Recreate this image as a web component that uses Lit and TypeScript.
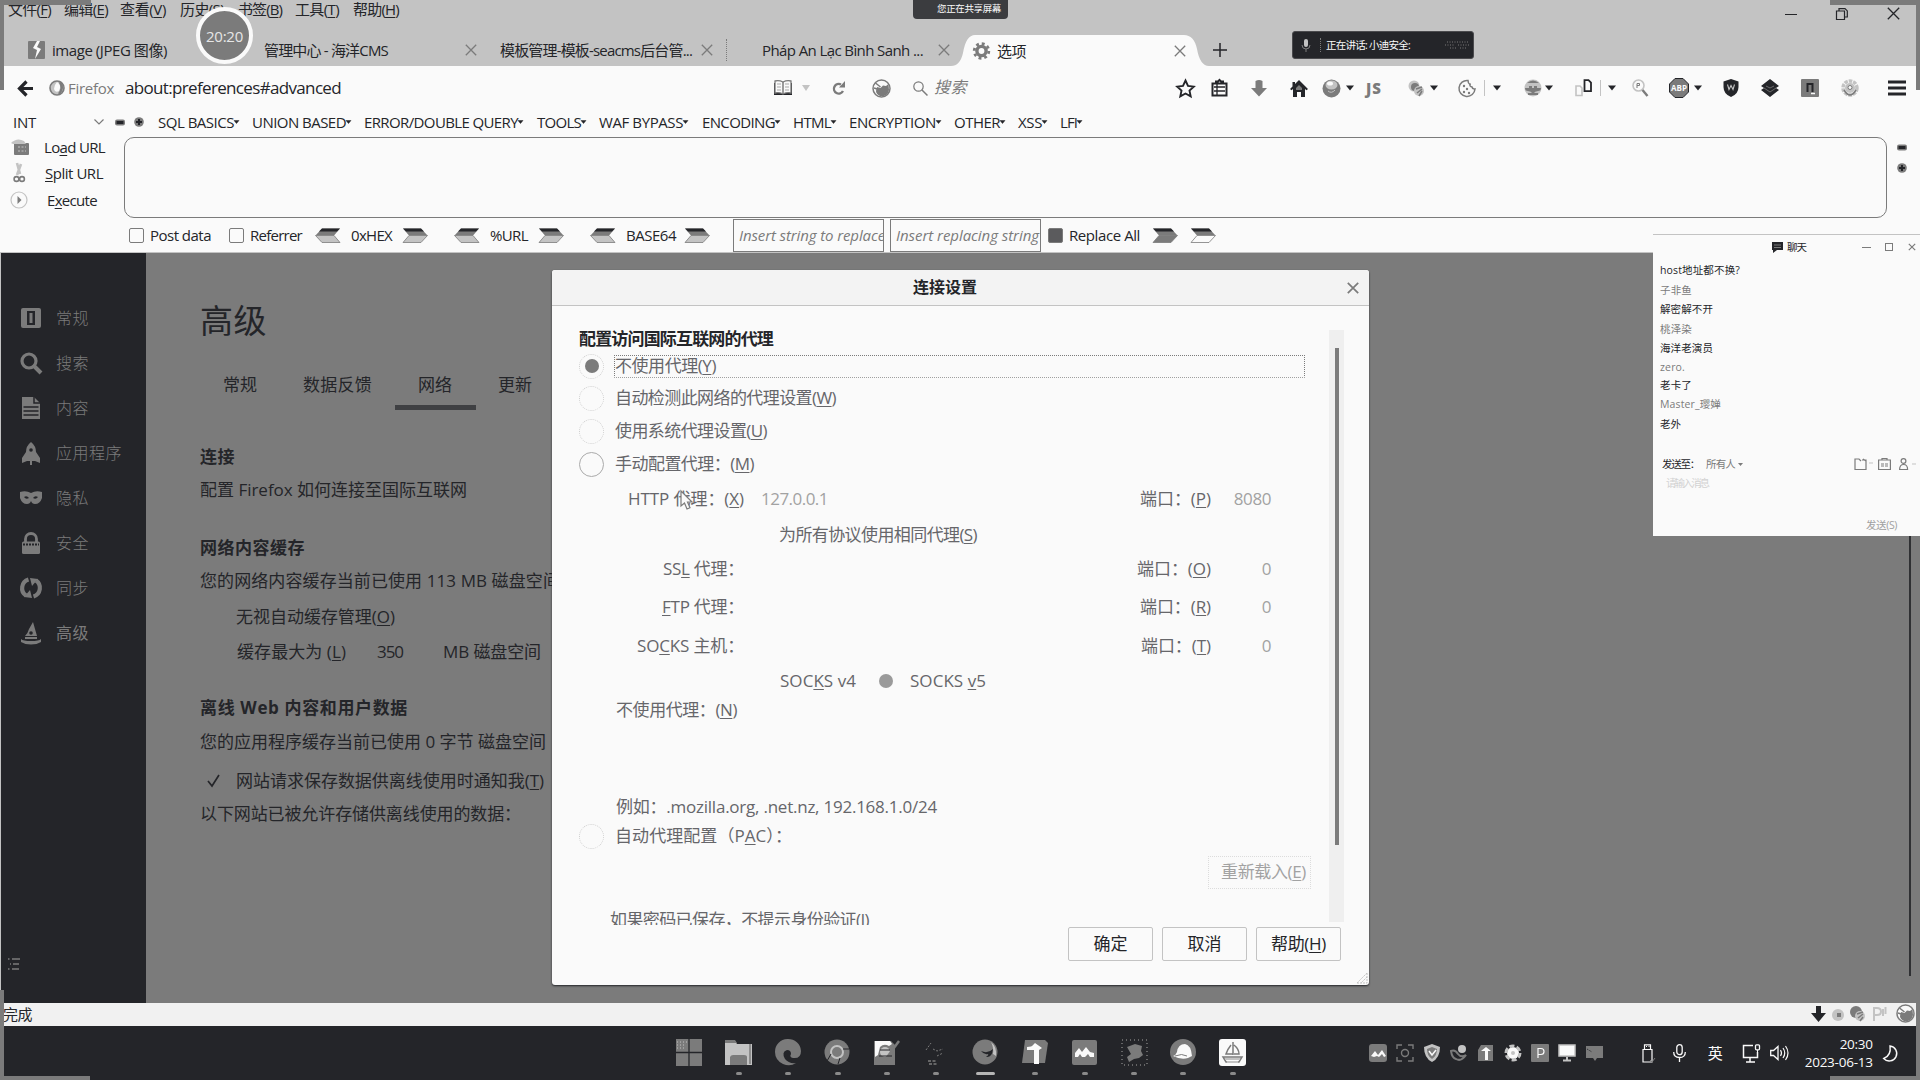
import { LitElement, html, css, svg, TemplateResult } from "lit";
import { customElement, property } from "lit/decorators.js";

/* One line of text spread over a given width. "&" marks the access key. */
@customElement("fit-text")
class FitText extends LitElement {
  @property() text = "";
  @property({ type: Number }) w = 0;
  static styles = css`
    :host { display: inline-block; white-space: pre; flex: none; line-height: 1.2; text-align: left; }
    u { text-underline-offset: 2px; text-decoration-thickness: 1px; }
  `;
  render() {
    const i = this.text.indexOf("&");
    if (i < 0) return html`<span>${this.text}</span>`;
    return html`<span>${this.text.slice(0, i)}<u>${this.text[i + 1]}</u>${this.text.slice(i + 2)}</span>`;
  }
  firstUpdated() {
    const s = this.renderRoot.querySelector("span") as HTMLElement;
    if (!this.w) return;
    const n = [...(s.textContent || "")].length;
    const natural = s.getBoundingClientRect().width;
    s.style.letterSpacing = (this.w - natural) / n + "px";
    this.style.width = this.w + "px";
  }
}

const T = (text: string, w: number, cls = "") => html`<fit-text class=${cls} .text=${text} .w=${w}></fit-text>`;
const I = (w: number, h: number, body: unknown, cls = "") =>
  html`<svg class="ic ${cls}" width=${w} height=${h} viewBox="0 0 ${w} ${h}">${body}</svg>`;

const D = "#242529", G = "#7b7b7b", L = "#c3c3c3", W = "#fafafa";

const cross = (s: number, c = G, sw = 1.3) =>
  I(s, s, svg`<path d="M.8 .8L${s - 0.8} ${s - 0.8}M${s - 0.8} .8L.8 ${s - 0.8}" stroke=${c} stroke-width=${sw}/>`);
const caret = I(8, 6, svg`<path d="M0 .5h8L4 5.5z" fill=${D}/>`);
const arrowR = (c2 = L) => I(25, 15, svg`<path d="M0 .5h18l6.5 7H6z" fill=${G}/><path d="M0 .5h18l3 3H3z" fill=${D}/><path d="M6 7.5h18.5l-6.500 7H0z" fill=${c2} stroke=${G} stroke-width=".8"/>`);
const arrowL = I(25, 15, svg`<path d="M25 .5H7L.5 7.500H19z" fill=${G}/><path d="M25 .5H7L4 3.500H22z" fill=${D}/><path d="M19 7.500H.5l6.500 7H25z" fill=${L} stroke=${G} stroke-width=".8"/>`);
const minus = I(10, 7, svg`<rect y=".5" width="10" height="6" rx="2" fill=${G}/><rect x="1.500" y="2" width="7" height="3" fill=${D}/>`);
const plusDot = I(10, 10, svg`<circle cx="5" cy="5" r="4.800" fill=${G}/><path d="M5 2v6M2 5h6" stroke=${D} stroke-width="2"/>`);
const noscript = I(19, 19, svg`<circle cx="9.500" cy="9.500" r="8.500" fill=${W} stroke=${G} stroke-width="1.500"/><path d="M5 8l3.500 1L11 6.500l3 .5 2.500-2 .5 6q-1 5-5 6H8q-4-2-4-5z" fill=${G}/><path d="M3.500 4l5 4M2 9l3 1" stroke=${G} stroke-width="1.500"/>`);

const nav: TemplateResult[] = [
  I(19, 19, svg`<path d="M9.500 1.500l2.500 5.400 5.800.7-4.300 4 1.200 5.800-5.200-2.900-5.200 2.900 1.200-5.800-4.300-4 5.800-.7z" fill="none" stroke=${D} stroke-width="1.900"/>`),
  I(17, 18, svg`<path d="M1.500 4.500h14v12h-14zM5 4.500v-2h2l1.500-1.500L10 2.500h2v2" fill=${W} stroke=${D} stroke-width="2"/><path d="M3 8h11M3 12h11M6 5v11" stroke=${D} stroke-width="1.300"/>`),
  I(16, 17, svg`<path d="M4.500 1q3.500-2 7 0v7H16l-8 8.500L0 8h4.500z" fill=${G}/>`),
  I(18, 17, svg`<path d="M9 0l9 9-1.500 1.200L15 9v8h-4v-5H7v5H3V9l-1.500 1.200L0 9l2.500-2.500V2H5v2z" fill=${D}/><path d="M9 5l3 3v2H6V8z" fill=${G}/>`),
  I(19, 19, svg`<circle cx="9.500" cy="9.500" r="9" fill=${G}/><ellipse cx="9.500" cy="6" rx="6" ry="4.500" fill=${L}/><ellipse cx="8" cy="4.500" rx="3" ry="2" fill=${W}/><path d="M6 12q3.500 3 7-1" stroke=${L} fill="none"/>`),
  caret,
  html`<b class="js">JS</b>`,
  I(17, 17, svg`<circle cx="6" cy="6" r="5.500" fill=${L}/><circle cx="7" cy="7" r="4" fill=${G}/><circle cx="11" cy="11" r="5" fill=${L}/><path d="M8 9l6-2M9 13l5-4M11 16l3-5" stroke=${G} stroke-width="1.500"/>`),
  caret,
  I(18, 19, svg`<path d="M10 1.500a8 8 0 1 0 7 8.500q-2.500.5-3-2-2.500-.5-2-2.500-2-1-2-4z" fill=${W} stroke=${G} stroke-width="1.500"/><g fill=${G}><circle cx="6" cy="7" r="1.200"/><circle cx="9" cy="10" r="1.200"/><circle cx="6" cy="13" r="1.200"/><circle cx="11" cy="14" r="1.200"/><circle cx="12" cy="5" r=".8"/></g>`),
  html`<i class="sep"></i>`,
  caret,
  I(18, 18, svg`<circle cx="9" cy="9" r="8.500" fill=${L}/><path d="M1 9h16q0 3-3 3t-5 3q-2-3-5-3T1 9zM3 4q6-5 12 0z" fill=${G}/><path d="M5 8h3M10 8h3M4 15h10" stroke=${G} stroke-width="2"/>`),
  caret,
  I(17, 18, svg`<path d="M1 7h4l2 2v7.500H1z" fill=${W} stroke=${L} stroke-width="1.600"/><path d="M9.500 1.200h4l2.500 2.500v8.500H9.500z" fill=${W} stroke=${D} stroke-width="1.800"/>`),
  html`<i class="sep"></i>`,
  caret,
  I(17, 18, svg`<circle cx="6.500" cy="6.500" r="5.500" fill=${W} stroke=${L} stroke-width="1.600"/><path d="M5 9V4.500h2.500v2H5" stroke=${G} fill="none"/><path d="M10.500 11l5 6" stroke=${G} stroke-width="2.400"/>`),
  I(20, 20, svg`<path d="M6 .5h8L19.500 6v8L14 19.500H6L.5 14V6z" fill=${G} stroke=${D}/><text x="10" y="13" font-size="8" font-weight="700" text-anchor="middle" fill=${W}>ABP</text>`),
  caret,
  I(16, 18, svg`<path d="M8 0l7.500 2.500V8q0 7-7.500 10Q.5 15 .5 8V2.500z" fill=${D}/><path d="M4.500 5.500l1.500 5 2-4 2 4 1.500-5" stroke=${L} fill="none" stroke-width="1.100"/>`),
  I(18, 18, svg`<path d="M9 0l9 7-3 2 3 2-9 7-9-7 3-2-3-2z" fill=${D}/><path d="M3 9l6 4 6-4M5 7l4 2 4-2" stroke=${G} fill="none" stroke-width=".8"/>`),
  I(18, 18, svg`<rect width="18" height="18" rx="1" fill=${G}/><path d="M6.500 13V5h5v8" fill="none" stroke=${D} stroke-width="2"/><path d="M10 14.500h4" stroke=${W} stroke-width="1.500"/>`),
  I(18, 18, svg`<circle cx="9" cy="9" r="7" fill="none" stroke=${L} stroke-width="3.500" stroke-dasharray="3.500 1"/><circle cx="9" cy="9" r="5" fill=${L}/><path d="M3 11q3 5 6 5t6-5" stroke=${G} fill="none" stroke-width="1.500"/><circle cx="9" cy="8.500" r="2" fill=${W} stroke=${G}/>`),
  I(18, 16, svg`<path d="M0 2h18M0 8h18M0 14h18" stroke=${D} stroke-width="3"/>`),
];

const sideIcons = [
  svg`<rect x="1" y="1" width="20" height="20" rx="2" fill=${G}/><rect x="7" y="4" width="8" height="14" fill=${D}/><rect x="9.500" y="6" width="3" height="10" fill=${G}/>`,
  svg`<circle cx="9" cy="9" r="7" fill="none" stroke=${G} stroke-width="3.200"/><path d="M14 14l7 7" stroke=${G} stroke-width="4"/>`,
  svg`<path d="M2 0h12l6 6v16H2z" fill=${G}/><path d="M14 0v6h6M3.500 10h15M3.500 14h15M3.500 18h15" stroke=${D} stroke-width="1.500" fill="none"/>`,
  svg`<path d="M11 0q5 4 5 10l4 6v5l-5-2H7l-5 2v-5l4-6Q6 4 11 0z" fill=${G}/><circle cx="11" cy="8" r="1.800" fill=${D}/><path d="M11 19v4" stroke=${G} stroke-width="2"/>`,
  svg`<path d="M0 5q6-2 11 1 5-3 11-1v6q-2 6-7 6-3 0-4-3-1 3-4 3-5 0-7-6z" fill=${G}/><path d="M4 10q3-2 5 1-3 2-5-1zM18 10q-3-2-5 1 3 2 5-1z" fill=${D}/>`,
  svg`<path d="M5.500 11V7a5.500 5.500 0 0 1 11 0v4" fill="none" stroke=${G} stroke-width="2.800"/><rect x="2" y="9.500" width="18" height="12.500" rx="1.500" fill=${G}/><path d="M3 12.500h16" stroke=${D} stroke-width="2" stroke-dasharray="2 1"/>`,
  svg`<path d="M8.500 2.500A9 9 0 0 0 6 18.500M13.500 19.500A9 9 0 0 0 16 3.500" fill="none" stroke=${G} stroke-width="4.200"/><path d="M4 20l8 1-2-8zM18 2l-8-1 2 8z" fill=${G}/>`,
  svg`<path d="M13 0l4 14H5q3-3 4-7z" fill=${G}/><circle cx="11" cy="11" r="1.800" fill=${D}/><path d="M1 17q2 2 10 2t10-2v3q-4 2.500-10 2.500T1 20z" fill=${G}/><path d="M5 15h12v2H5z" fill=${G}/>`,
];
const sideNames = ["常规", "搜索", "内容", "应用程序", "隐私", "安全", "同步", "高级"];

const apps = [
  svg`<rect width="26" height="27" fill=${G}/><path d="M13 0v27M0 13.500h26" stroke=${D} stroke-width="1.300"/><path d="M1 3h11M1 6h9M1 9h7" stroke=${L} stroke-dasharray="1 2"/>`,
  svg`<path d="M0 2h10l2 3h15v21H0z" fill=${L}/><path d="M0 1h10l2 3H0z" fill=${G}/><path d="M5 26v-8q1-2 3-2h11q3 0 3 2v8z" fill=${G}/><path d="M25 5v20" stroke=${G} stroke-width="1.500"/>`,
  svg`<path d="M0 13A13 12.500 0 0 1 26 12q0 8-8 7-4-1-2-4 0-4-4-4-6 2-2 9 4 5 11 4-6 4-13 1Q0 21 0 13z" fill=${G}/>`,
  svg`<circle cx="13" cy="13" r="12.500" fill=${G}/><circle cx="13" cy="13" r="6" fill=${G} stroke=${L} stroke-width="2"/><path d="M19 10h6M7 15l-4 7M16 19l-2 6" stroke=${D}/>`,
  svg`<path d="M0 2h17l4 4v20H0z" fill=${G}/><path d="M1 2h15l2 3-3 2q-5-3-9 1l-2 8-3 2z" fill=${W}/><circle cx="11" cy="13" r="5" fill=${L}/><path d="M9 24L25 2" stroke=${G} stroke-width="2.500"/><path d="M6 11h10M5 17h13" stroke=${D}/>`,
  svg`<path d="M3 11l5-7M10 10l4 2 6-2M14 17l6-3" stroke=${G} stroke-dasharray="2 1.500" fill="none"/><path d="M5 22h9M6 25h9" stroke=${G} stroke-width="1.500" stroke-dasharray="3 1.500"/>`,
  svg`<circle cx="13" cy="13" r="12.500" fill=${G}/><path d="M9 12q7 3 12-2-1 9-7 8 3-2 2-3-4 1-7-3z" fill=${D}/><path d="M19 3q6 5 5 14l-3-2q1-6-2-12z" fill=${L}/>`,
  svg`<path d="M3 1h20l3 3-3 20H0z" fill=${G}/><path d="M13 4l7 5-3 2v14h-5V11H6z" fill=${W}/><path d="M5 8l8-1v4H5z" fill=${W}/>`,
  svg`<rect x="1" y="1" width="25" height="25" rx="2" fill=${G}/><path d="M4 18V14l4-5 3 4 4-5 4 5 4 1v4h-4l-2-3-3 3h-3l-2-3-2 3z" fill=${W}/>`,
  svg`<rect x="1" y="1" width="25" height="25" fill="none" stroke=${G} stroke-width="1.500" stroke-dasharray="1 3"/><path d="M6 8l8-3 7 2-1 5 2 4-4 3-5 1-5 3-2-5 4-3z" fill=${G}/>`,
  svg`<circle cx="13" cy="13" r="13" fill=${G}/><path d="M3 17q3-1 4-4 1-8 8-8 6 1 7 12l-4 2q-7 2-15-2z" fill=${W}/><path d="M5 17q7-3 12 0" stroke=${G} fill="none"/>`,
  svg`<rect width="27" height="27" rx="3" fill=${W}/><path d="M14 3v13M12 6q-4 5-5 9h7M15 6q5 4 5 9h-5M4 18h19l-3 5H7z" stroke=${G} fill="none" stroke-width="1.500"/><path d="M6 20h15M8 23h11" stroke=${L} stroke-width="2"/>`,
];

const tray = [
  svg`<rect width="18" height="18" rx="3" fill=${G}/><path d="M2 12l4-5 3 4 4-5 4 6-2 1-2-3-3 3-2-1-3 1z" fill=${W}/>`,
  svg`<path d="M1 5V1h5M12 1h5v4M17 13v4h-5M6 17H1v-4" stroke=${G} fill="none" stroke-width="1.400"/><circle cx="9" cy="9" r="3.500" fill="none" stroke=${G} stroke-width="1.400"/>`,
  svg`<path d="M9 0l8 3q0 11-8 15Q1 14 1 3z" fill=${L}/><path d="M9 3l5 2q0 7-5 10Q4 12 4 5z" fill=${G}/><path d="M6 7l3 4 4-5" stroke=${W} fill="none" stroke-width="1.500"/>`,
  svg`<circle cx="12" cy="5" r="4" fill=${L}/><path d="M1 7q4-2 7 3 3 4 8 1-5 7-10 4-4-1-5-8z" fill="none" stroke=${G} stroke-width="2"/>`,
  svg`<path d="M4 1h12v16H1V6z" fill=${G}/><path d="M9 3l5 4h-3v9H8V7H4z" fill=${W}/>`,
  svg`<circle cx="9" cy="9" r="6" fill=${W}/><circle cx="9" cy="9" r="7" fill="none" stroke=${L} stroke-width="3" stroke-dasharray="5 2.300"/><circle cx="9" cy="9" r="2" fill=${L}/>`,
  svg`<rect width="18" height="18" rx="1" fill=${G}/><path d="M7 14V4.500h3q3 0 3 3t-3 3H7" stroke=${W} fill="none" stroke-width="1.200"/>`,
  svg`<rect x="1" y="1" width="16" height="11" fill=${W} stroke=${L} stroke-width="1.500"/><path d="M9 13v3M5 16.500h8" stroke=${L} stroke-width="2"/>`,
  svg`<path d="M1 2h17v12H12l-2 3-2-3H1z" fill=${G}/><path d="M2 5l5 3" stroke=${D} stroke-dasharray="1 1"/>`,
];

const chat = [
  ["host地址都不换?", 80, 0], ["子非鱼", 32, 1], ["解密解不开", 53, 0], ["桃泽染", 32, 1], ["海洋老演员", 53, 0],
  ["zero.", 25, 1], ["老卡了", 32, 0], ["Master_璎婵", 61, 1], ["老外", 21, 0],
] as [string, number, number][];

const sqlMenus: [string, number][] = [
  ["SQL BASICS", 76], ["UNION BASED", 94], ["ERROR/DOUBLE QUERY", 154], ["TOOLS", 44], ["WAF BYPASS", 84],
  ["ENCODING", 73], ["HTML", 38], ["ENCRYPTION", 87], ["OTHER", 46], ["XSS", 24], ["LFI", 17],
];

const proxyRow = (label: string, lw: number, value: string, port: string, pw: number, num: string) => html`
  <div class="prow">
    <div class="r">${T(label, lw)}</div>
    <div class="val">${value ? T(value, 67, "lt") : ""}</div>
    <div class="r">${T(port, pw)}</div>
    <div class="r lt">${T(num, num.length * 9.3)}</div>
  </div>`;

const radio = (state: string, text: TemplateResult) =>
  html`<div class="rrow"><i class="radio ${state}"></i>${text}</div>`;

@customElement("app-root")
class AppRoot extends LitElement {
  static styles = css`
    :host { display: block; width: 1920px; height: 1080px; overflow: hidden; position: relative; background: #fafafa;
      font-family: "Open Sans", "Noto Sans CJK SC", sans-serif; font-size: 15px; color: #242529; }
    * { box-sizing: border-box; }
    .ic { display: block; flex: none; overflow: visible; }
    .g { color: #7b7b7b; }
    .lt { color: #a2a2a2; }
    .top { background: #c3c3c3; height: 66px; }
    .bar { display: flex; height: 34px; align-items: flex-start; }
    .menus { display: grid; grid-template-columns: 56px 56px 60px 58px 57px 58px 60px; height: 16px; align-items: center; padding-left: 8px; }
    .winctl { margin-left: auto; height: 27px; display: flex; align-items: center; gap: 39px; padding-right: 20px; }
    .tabs { display: grid; height: 32px; align-items: center;
      grid-template-columns: 24px 212px 201px 35px 201px 25px 36px 176px 13px 262px 40px; padding-left: 28px; }
    .tabs .dots { border-left: 1px dotted #7b7b7b; height: 22px; width: 1px; }
    .active { height: 31px; position: relative; display: flex; align-items: center; padding: 0 25px 0 22px; align-self: end; }
    .active .shape { position: absolute; left: 0; top: 0; z-index: 0; }
    .active .in { position: relative; display: flex; align-items: center; width: 100%; }
    .active .in > :last-child { margin-left: auto; margin-right: 2px; }
    .active fit-text { margin-left: 7px; }
    .nav { height: 44px; display: grid; align-items: center; padding-left: 17px;
      grid-template-columns: 32px 19px 57px 649px 28px 30px 40px 41px 22px 241px 749px; }
    .url { font-size: 17px; }
    .tools { display: grid; align-items: center; justify-items: start;
      grid-template-columns: 35px 40px 39px 32px 24px 21px 41px 22px 28px 26px 9px 31px 21px 30px 25px 8px 24px 37px 25px 29px 38px 40px 40px 47px 20px; }
    .js { font: 900 15px "Noto Sans", sans-serif; color: #7b7b7b; letter-spacing: 1px; margin-left: -1px; }
    .sep { width: 1px; height: 16px; background: #c3c3c3; }
    .search { font-style: italic; font-size: 16px; margin-left: -1px; }
    .sql { height: 27px; display: grid; align-items: center; padding: 0 0 3px 13px;
      grid-template-columns: 81px 21px 19px 24px 94px 112px 173px 62px 103px 91px 56px 105px 64px 42px 40px; }
    .sql .m { display: flex; align-items: center; }
    .load { display: grid; grid-template-columns: 124px 1763px 33px; height: 81px; }
    .btns { display: grid; grid-template-rows: 24px 27px 28px; margin-top: -2px; align-content: start; }
    .btns > div { display: grid; grid-template-columns: 34px 80px; align-items: center; padding-left: 10px; }
    .btns fit-text { justify-self: start; }
    .s2 { padding-left: 1px; } .s3 { padding-left: 3px; }
    .box { border: 1px solid #7b7b7b; border-radius: 10px; }
    .side2 { display: flex; flex-direction: column; gap: 12px; padding: 7px 0 0 10px; }
    .post { height: 35px; display: grid; align-items: center; padding-left: 129px; border-bottom: 1px solid #c3c3c3;
      grid-template-columns: 21px 79px 21px 65px 36px 52px 51px 36px 49px 51px 36px 59px 48px 157px 158px 21px 84px 38px 30px; }
    .cb { width: 15px; height: 15px; border: 1.500px solid #7b7b7b; border-radius: 2px; }
    .cb.on { background: #5b5b5d; }
    .inp { height: 33px; width: 151px; border: 1px solid #7b7b7b; display: flex; align-items: center; padding-left: 5px; overflow: hidden; font-style: italic; color: #7b7b7b; }
    .main { height: 750px; display: flex; background: #7b7b7b; position: relative; }
    .side { width: 146px; background: #242529; border-left: 1px solid #c3c3c3; color: #7b7b7b; font-size: 16px; padding: 43px 0 0 19px; display: flex; flex-direction: column; font-weight: 300; }
    .sitem { height: 45px; display: grid; grid-template-columns: 36px 70px; align-items: center; }
    .sitem.cur { font-weight: 400; }
    .list { margin: 302px 0 0 -12px; }
    .cont { width: 420px; padding-left: 54px; overflow: hidden; font-size: 17px; display: grid; align-content: start;
      grid-template-rows: 46px 44px 97px 34px 32px 25px 34px 32px 40px 30px 24px 34px 34px 44px 22px; align-items: center; }
    .bold { font-weight: 700; }
    .h1 { font-size: 33px; }
    .ctabs { display: grid; grid-template-columns: 80px 115px 80px 60px; padding: 32px 0 0 23px; align-self: start; align-items: start; }
    .un { border-bottom: 5px solid #3f4043; height: 35px; width: 81px; margin-left: -23px; padding-left: 23px; display: flex; align-items: flex-start; }
    .ind { padding-left: 36px; display: flex; }
    .max { display: grid; grid-template-columns: 140px 66px 100px; padding-left: 37px; }
    .chk { display: grid; grid-template-columns: 29px 310px; padding-left: 7px; align-items: center; }
    .vline { position: absolute; left: 1909px; top: 280px; width: 2px; height: 443px; background: #2f3033; }
    .dlg { position: absolute; left: 552px; top: 270px; width: 817px; height: 715px; background: #fafafa; border-radius: 3px; box-shadow: 0 1px 2px #242529; font-size: 17px; color: #66666a; display: grid; grid-template-rows: 36px 619px 60px; }
    .dt { display: grid; grid-template-columns: 361px 434px 22px; align-items: center; background: #f3f3f3; border-bottom: 1px solid #c3c3c3; border-radius: 3px 3px 0 0; color: #242529; font-size: 16px; }
    .db { display: grid; grid-template-columns: 750px 15px; padding: 22px 0 0 27px; overflow: hidden; }
    .form { overflow: hidden; height: 597px; display: grid; grid-template-rows: 23px 29px 35px 32px 33px 38px 34px 35px 41px 36px 34px 24px 71px 28px 30px 42px 32px; align-items: center; }
    .dark { color: #242529; }
    .rrow { display: flex; align-items: center; gap: 11px; margin-top: 1px; }
    .radio { width: 25px; height: 25px; border-radius: 50%; border: 1px dotted #cfcfcf; flex: none; display: grid; place-items: center; }
    .radio.ring { border: 1px solid #aaa; }
    .radio.sel::after, .dot::after { content: ""; width: 14px; height: 14px; border-radius: 50%; background: #7b7b7b; }
    .dot { display: grid; place-items: center; width: 14px; }
    .dot::after { background: #9a9a9a; }
    .focus { border: 1px dotted #7b7b7b; border-bottom-color: #a0a0a0; width: 691px; height: 23px; display: flex; align-items: center; margin-left: -1px; }
    .prow { display: grid; grid-template-columns: 165px 302px 165px 60px; align-items: center; }
    .r { display: flex; justify-content: flex-end; }
    .val { padding-left: 17px; display: flex; }
    .pad1 { padding-left: 200px; display: flex; }
    .pad2 { padding-left: 37px; display: flex; }
    .sv { display: grid; grid-template-columns: 99px 31px 80px; padding-left: 201px; align-items: center; }
    .reload { justify-self: start; margin-left: 629px; width: 103px; height: 33px; border: 1px dotted #dcdcdc; display: flex; align-items: center; padding-left: 12px; }
    .last { align-self: start; padding: 15px 0 0 31px; }
    .track { background: #efefef; height: 592px; margin-top: 2px; padding: 18px 0 0 6px; }
    .thumb { width: 4px; height: 497px; background: #7b7b7b; }
    .df { display: flex; gap: 9px; padding: 2px 28px 0 0; justify-content: flex-end; color: #242529; }
    .btn { width: 85px; height: 34px; border: 1px solid #c3c3c3; border-radius: 2px; display: flex; align-items: center; justify-content: center; }
    .grip { position: absolute; right: 1px; bottom: 1px; }
    .cursor { position: absolute; left: 680px; top: 490px; }
    .status { height: 23px; background: #f1f1f1; display: flex; align-items: center; padding: 0 5px 2px 3px; }
    .sicons { margin-left: auto; display: grid; grid-template-columns: 20px 19px 23px 23px 19px; align-items: center; }
    .task { height: 54px; background: #242529; color: #fafafa; display: flex; align-items: center; padding-left: 676px; }
    .apps { display: grid; grid-template-columns: repeat(12, 49.400px); }
    .app { height: 54px; width: 27px; display: grid; grid-template-rows: 44px 5px; align-items: end; justify-items: center; }
    .app > .ic { margin-bottom: 4px; }
    .run { width: 6px; height: 3px; border-radius: 2px; background: #8a8a8a; }
    .run.wide { width: 19px; background: #b5b5b5; }
    .run.none { visibility: hidden; }
    .tray { margin-left: 100px; display: grid; grid-template-columns: repeat(9, 27px); align-items: center; }
    .sys { display: grid; grid-template-columns: 32px 35px 34px 28px 35px 68px; align-items: center; margin-left: 29px; }
    .clock { text-align: right; display: flex; flex-direction: column; align-items: flex-end; font-size: 13.500px; gap: 1px; }
    .moon { margin-left: 10px; }
    .chat { position: absolute; left: 1653px; top: 234px; width: 267px; height: 302px; background: #fafafa; border-top: 1px solid #c3c3c3; font-size: 10.500px; }
    .ct { height: 24px; display: grid; grid-template-columns: 15px 75px 23px 23px 8px; padding-left: 119px; align-items: center; }
    .msgs { display: grid; grid-template-rows: 20px 20px 19px 20px 19px 18px 18px 20px 20px; align-items: center; padding: 1px 0 0 7px; }
    .to { display: grid; grid-template-columns: 44px 32px 116px 24px 21px 20px; padding-left: 9px; height: 20px; margin-top: 20px; align-items: center; }
    .ph { padding: 2px 0 0 13px; height: 20px; color: #d2d2d2; }
    .send { padding: 24px 0 0 213px; color: #a0a0a0; }
    .bubble { position: absolute; left: 196px; top: 7px; width: 57px; height: 57px; border-radius: 50%; background: #7b7b7b; border: 4px solid #fafafa; color: #e6e6e6; display: grid; place-items: center; }
    .share { position: absolute; left: 913px; top: 0; width: 95px; height: 19px; background: #3b3c3f; border-radius: 0 0 4px 4px; color: #fafafa; font-size: 9.500px; display: flex; align-items: center; padding: 0 0 2px 24px; }
    .talk { position: absolute; left: 1292px; top: 31px; width: 182px; height: 28px; background: #242529; border: 1px solid #4a4a4d; border-radius: 3px; color: #fafafa; font-size: 10.500px; display: grid; grid-template-columns: 18px 6px 119px 26px; align-items: center; padding-left: 9px; }
    .talk .bar2 { height: 14px; width: 1px; border-left: 1px dotted #7b7b7b; }
    .fr { position: absolute; background: #7b7b7b; }
    .a { left: 0; top: 0; width: 91px; height: 5px; } .b { left: 0; top: 0; width: 4px; height: 90px; }
    .c { right: 0; top: 0; width: 90px; height: 5px; } .d { right: 0; top: 5px; width: 4px; height: 85px; }
    .e { left: 0; bottom: 0; width: 90px; height: 4px; } .f { left: 0; bottom: 0; width: 4px; height: 90px; }
    .h { right: 0; bottom: 0; width: 90px; height: 4px; } .i { right: 0; bottom: 0; width: 4px; height: 77px; }
  `;

  render() {
    return html`
      <div class="top">
        <div class="bar">
          <div class="menus">
            ${T("文件(&F)", 43)}${T("编辑(&E)", 44)}${T("查看(&V)", 46)}${T("历史(&S)", 44)}${T("书签(&B)", 44)}${T("工具(&T)", 44)}${T("帮助(&H)", 46)}
          </div>
          <div class="winctl">
            ${I(12, 12, svg`<path d="M0 6.500h12" stroke=${D}/>`)}
            ${I(12, 12, svg`<path d="M.5 3h8v8.500h-8zM3 3V.6h6l2.300 2.300V9H8.500" fill="none" stroke=${D} stroke-width="1.200"/>`)}
            ${cross(13, D, 1.3)}
          </div>
        </div>
        <div class="tabs">
          ${I(17, 18, svg`<rect width="17" height="18" rx="1" fill=${G}/><path d="M9 0L5 7l4 2-2 9 6-10-4-2 3-6z" fill=${W}/>`)}
          ${T("image (JPEG 图像)", 115)}
          ${T("管理中心 - 海洋CMS", 124)}${cross(12)}
          ${T("模板管理-模板-seacms后台管...", 192)}${cross(12)}<i class="dots"></i>
          ${T("Pháp An Lạc Bình Sanh ...", 161)}${cross(12)}
          <div class="active">
            ${I(258, 31, svg`<path d="M0 31Q9 31 12 18Q15 0 24 0H233Q243 0 246 14Q249 31 258 31z" fill=${W}/>`, "shape")}
            <div class="in">
              ${I(17, 18, svg`<circle cx="8.500" cy="9" r="4.600" fill="none" stroke=${G} stroke-width="3.400"/><circle cx="8.500" cy="9" r="7.300" fill="none" stroke=${G} stroke-width="2.800" stroke-dasharray="2.870 2.870"/>`)}
              ${T("选项", 29)}${cross(12)}
            </div>
          </div>
          ${I(14, 14, svg`<path d="M7 0v14M0 7h14" stroke=${D} stroke-width="1.500"/>`)}
        </div>
      </div>

      <div class="nav">
        ${I(17, 17, svg`<path d="M16 8.500H3M9.500 1.500l-7 7 7 7" fill="none" stroke=${D} stroke-width="3.200"/>`)}
        ${I(16, 16, svg`<circle cx="8" cy="8" r="7" fill=${L} stroke=${G} stroke-width="1.600"/><path d="M8 2q5 3 2 9-4 2-5-2 0-4 3-7z" fill=${W}/><path d="M11 2q4 6-1 12" fill="none" stroke=${G} stroke-width="2.500"/>`)}
        ${T("Firefox", 46, "g")}
        ${T("about:preferences#advanced", 216, "url")}
        ${I(18, 17, svg`<path d="M0 3h18v12H0z" fill=${D}/><path d="M1 1q4-1 8 1 4-2 8-1v12q-4-1-8 1-4-2-8-1z" fill=${W} stroke=${G} stroke-width="1.300"/><path d="M9 2v12" stroke=${G} stroke-width="1.500"/><path d="M3 4h4M3 7h4M3 10h4M11 4h4M11 7h4M11 10h4" stroke=${L} stroke-width="1.300"/>`)}
        ${I(8, 6, svg`<path d="M0 0h8L4 6z" fill=${L}/>`)}
        ${I(13, 14, svg`<path d="M9 3.500A4.800 4.800 0 1 0 11 10" fill="none" stroke=${G} stroke-width="2.400"/><path d="M13 0v6.500H7z" fill=${G}/>`)}
        ${noscript}
        ${I(15, 15, svg`<circle cx="5.500" cy="5.500" r="4.700" fill="none" stroke=${G} stroke-width="1.200"/><path d="M9 9l5.500 5.500" stroke=${G} stroke-width="1.500"/>`)}
        ${T("搜索", 33, "g search")}
        <div class="tools">${nav}</div>
      </div>

      <div class="sql">
        ${T("INT", 23)}
        ${I(10, 6, svg`<path d="M.5 .5L5 5 9.500 .5" fill="none" stroke=${G} stroke-width="1.200"/>`)}
        ${minus}${plusDot}
        ${sqlMenus.map(([t, w]) => html`<div class="m">${T(t, w)}${I(5, 4, svg`<path d="M0 .5h5L2.500 3.500z" fill=${D} stroke=${D} stroke-width=".5"/>`)}</div>`)}
      </div>

      <div class="load">
        <div class="btns">
          <div>${I(19, 16, svg`<rect x="4" y="4" width="15" height="12" rx="1" fill=${G}/><path d="M1 4q6-6 13-2l2 3H3z" fill=${L}/><path d="M8 8h8M8 12h8" stroke=${L} stroke-dasharray="2 1.500"/>`)}${T("Lo&ad URL", 61)}</div>
          <div>${I(19, 20, svg`<path d="M7 0l3 11M11 1L7 12" stroke=${L} stroke-width="2.600"/><circle cx="6.500" cy="16" r="2.400" fill="none" stroke=${G} stroke-width="1.600"/><circle cx="12" cy="16" r="2.400" fill="none" stroke=${G} stroke-width="1.600"/>`)}${T("&Split URL", 58, "s2")}</div>
          <div>${I(18, 18, svg`<circle cx="9" cy="9" r="8" fill="none" stroke=${L} stroke-width="1.200"/><path d="M7.500 5l4 4-4 4z" fill=${G}/>`)}${T("E&xecute", 50, "s3")}</div>
        </div>
        <div class="box"></div>
        <div class="side2">${minus}${plusDot}</div>
      </div>

      <div class="post">
        <i class="cb"></i>${T("Post data", 61)}<i class="cb"></i>${T("Referrer", 52)}
        ${arrowL}${T("0xHEX", 41)}${arrowR()}${arrowL}${T("%URL", 38)}${arrowR()}${arrowL}${T("BASE64", 50)}${arrowR()}
        <div class="inp">${T("Insert string to replace", 146)}</div>
        <div class="inp">${T("Insert replacing string", 143)}</div>
        <i class="cb on"></i>${T("Replace All", 71)}${arrowR(G)}${arrowR(W)}
      </div>

      <div class="main">
        <div class="side">
          ${sideNames.map((n, i) => html`<div class="sitem ${i === 7 ? "cur" : ""}">${I(22, 23, sideIcons[i])}${T(n, n.length * 16.5)}</div>`)}
          ${I(12, 12, svg`<path d="M0 1h1.500M4 1h8M2 6h1M5 6h6M0 11h1.500M4 11h7" stroke=${G} stroke-width="1.500"/>`, "list")}
        </div>
        <div class="cont">
          <span></span>
          ${T("高级", 67, "h1")}
          <div class="ctabs">${T("常规", 34)}${T("数据反馈", 69)}<div class="un">${T("网络", 34)}</div>${T("更新", 34)}</div>
          ${T("连接", 35, "bold")}
          ${T("配置 Firefox 如何连接至国际互联网", 267)}
          <span></span>
          ${T("网络内容缓存", 105, "bold")}
          ${T("您的网络内容缓存当前已使用 113 MB 磁盘空间", 360)}
          <div class="ind">${T("无视自动缓存管理(&O)", 159)}</div>
          <div class="max">${T("缓存最大为 (&L)", 109)}${T("350", 26)}${T("MB 磁盘空间", 98)}</div>
          <span></span>
          ${T("离线 Web 内容和用户数据", 208, "bold")}
          ${T("您的应用程序缓存当前已使用 0 字节 磁盘空间", 346)}
          <div class="chk">${I(13, 13, svg`<path d="M1 7l4 5L12 1" fill="none" stroke=${D} stroke-width="1.700"/>`)}${T("网站请求保存数据供离线使用时通知我(&T)", 308)}</div>
          ${T("以下网站已被允许存储供离线使用的数据：", 321)}
        </div>
        <i class="vline"></i>
      </div>

      <div class="status">
        ${T("完成", 29)}
        <div class="sicons">
          ${I(15, 16, svg`<path d="M5 0h5v7h5l-7.500 9L0 7h5z" fill=${D}/>`)}
          ${I(14, 14, svg`<circle cx="7" cy="8" r="6" fill=${L}/><path d="M6 6h4v4H6z" fill=${G}/>`)}
          ${I(15, 15, svg`<circle cx="6" cy="6" r="6" fill=${G}/><circle cx="10" cy="10" r="5" fill=${L}/><path d="M7 8l6-2M8 12l5-4M10 15l3-4" stroke=${G} stroke-width="1.500"/>`)}
          ${I(14, 14, svg`<path d="M1 14V1h3q4 0 4 3.500T4 8H1M12.500 0v7M10 9V2" fill="none" stroke=${L} stroke-width="2"/>`)}
          ${noscript}
        </div>
      </div>

      <div class="task">
        <div class="apps">
          ${apps.map((a, i) => html`<div class="app">${I(27, 27, a)}<i class="run ${i === 0 ? "none" : i === 6 ? "wide" : ""}"></i></div>`)}
        </div>
        <div class="tray">${tray.map((t) => I(18, 18, t))}</div>
        <div class="sys">
          ${I(14, 19, svg`<path d="M2 5.500h9V18H2zM3.500 5V.8h6V5M5 2.500h1M7.500 2.500h1" fill="none" stroke=${W} stroke-width="1.200"/><path d="M9 16l2 2 3-4" stroke=${G} fill="none"/>`)}
          ${I(13, 18, svg`<rect x="3.800" y=".7" width="5.400" height="10" rx="2.700" fill="none" stroke=${W} stroke-width="1.300"/><path d="M.7 8q0 5.500 5.800 5.500T12.300 8M6.500 13.500V18" fill="none" stroke=${W} stroke-width="1.300"/>`)}
          ${T("英", 15)}
          ${I(19, 19, svg`<path d="M11 1.500H1.500v12h14V8M8 14v4M4 18h9" fill="none" stroke=${W} stroke-width="1.500"/><rect x="13.500" y=".8" width="4" height="5" rx="1" fill="none" stroke=${W} stroke-width="1.300"/><path d="M15.500 6v3" stroke=${W}/>`)}
          ${I(19, 16, svg`<path d="M.7 5.500H3.500L8 1.500v13L3.500 10.500H.7z" fill="none" stroke=${W} stroke-width="1.300"/><path d="M10.500 5q2 3 0 6M13 3q3.500 5 0 10M15.500 1q5 7 0 14" fill="none" stroke=${W} stroke-width="1.200"/>`)}
          <div class="clock">${T("20:30", 33)}${T("2023-06-13", 68)}</div>
        </div>
        ${I(15, 17, svg`<path d="M7 1a7.500 7.500 0 1 1-6.300 12.500Q8.500 10.500 7 1z" fill="none" stroke=${W} stroke-width="1.400"/>`, "moon")}
      </div>

      <div class="dlg">
        <div class="dt"><span></span>${T("连接设置", 64, "bold")}${cross(12, G, 1.7)}</div>
        <div class="db">
          <div class="form">
            ${T("配置访问国际互联网的代理", 194, "bold dark")}
            ${radio("sel", html`<div class="focus">${T("不使用代理(&Y)", 101)}</div>`)}
            ${radio("", T("自动检测此网络的代理设置(&W)", 221))}
            ${radio("", T("使用系统代理设置(&U)", 152))}
            ${radio("ring", T("手动配置代理：(&M)", 139))}
            ${proxyRow("HTTP 代理：(&X)", 116, "127.0.0.1", "端口：(&P)", 71, "8080")}
            <div class="pad1">${T("为所有协议使用相同代理(&S)", 198)}</div>
            ${proxyRow("SS&L 代理：", 81, "", "端口：(&O)", 74, "0")}
            ${proxyRow("&FTP 代理：", 82, "", "端口：(&R)", 71, "0")}
            ${proxyRow("SO&CKS 主机：", 107, "", "端口：(&T)", 70, "0")}
            <div class="sv">${T("SOC&KS v4", 76)}<i class="dot"></i>${T("SOCKS &v5", 76)}</div>
            <div class="pad2">${T("不使用代理：(&N)", 121)}</div>
            <span></span>
            <div class="pad2">${T("例如：.mozilla.org, .net.nz, 192.168.1.0/24", 321)}</div>
            ${radio("", T("自动代理配置（P&AC）：", 177))}
            <div class="reload lt">${T("重新载入(&E)", 85)}</div>
            <div class="last">${T("如果密码已保存，不提示身份验证(&I)", 259)}</div>
          </div>
          <div class="track"><div class="thumb"></div></div>
        </div>
        <div class="df">
          <div class="btn">${T("确定", 34)}</div><div class="btn">${T("取消", 34)}</div><div class="btn">${T("帮助(&H)", 55)}</div>
        </div>
        ${I(12, 12, svg`<path d="M11 1v10H1M11 5l-6 6M11 1L1 11" stroke=${L} stroke-dasharray="2 1" fill="none"/>`, "grip")}
      </div>
      ${I(13, 20, svg`<path d="M1 1v15l3.500-3 2.500 6 3-1.300-2.500-5.700H12z" fill=${W} stroke=${G} stroke-width="1.200"/>`, "cursor")}

      <div class="chat">
        <div class="ct">
          ${I(11, 11, svg`<path d="M0 0h11v8H5l-4 3V8H0z" fill=${D}/><path d="M2 3h7M2 5.500h7" stroke=${G}/>`)}
          ${T("聊天", 19)}
          ${I(9, 9, svg`<path d="M0 4.500h9" stroke=${G}/>`)}
          ${I(8, 8, svg`<rect x=".5" y=".5" width="7" height="7" fill="none" stroke=${G}/>`)}
          ${cross(8, G, 1.2)}
        </div>
        <div class="msgs">${chat.map(([t, w, g]) => T(t, w, g ? "g" : ""))}</div>
        <div class="to">
          ${T("发送至：", 37)}${T("所有人", 29, "g")}
          ${I(5, 3, svg`<path d="M0 0h5L2.500 3z" fill=${G}/>`)}
          ${I(19, 12, svg`<path d="M8 2H12v9.500H1V1h4l2 2M9 1l3 2" fill="none" stroke=${G} stroke-width="1.200"/><path d="M15 5h4" stroke=${L}/>`)}
          ${I(13, 12, svg`<path d="M.6 2h11.800v9.500H.6zM4 2V.5h5V2" fill="none" stroke=${G} stroke-width="1.200"/><path d="M3 6h7M3 8h7" stroke=${G} stroke-dasharray="3 1"/>`)}
          ${I(17, 12, svg`<circle cx="4.500" cy="3" r="2.400" fill="none" stroke=${G} stroke-width="1.200"/><path d="M.6 11.500q0-5 4-5t4 5z" fill="none" stroke=${G} stroke-width="1.200"/><path d="M13 6h4" stroke=${L}/>`)}
        </div>
        <div class="ph">${T("请输入消息", 42)}</div>
        <div class="send">${T("发送(S)", 31)}</div>
      </div>

      <div class="bubble">${T("20:20", 37)}</div>
      <div class="share">${T("您正在共享屏幕", 64)}</div>
      <div class="talk">
        ${I(8, 13, svg`<rect x="2" y="0" width="4" height="8" rx="2" fill=${L}/><path d="M0 6q0 4 4 4t4-4M4 10v3" fill="none" stroke=${G}/>`)}
        <i class="bar2"></i>${T("正在讲话: 小迪安全:", 84)}
        ${I(24, 10, svg`<path d="M2 2h22M0 5h10M13 5h11M5 8h6M15 8h7" stroke=${G} stroke-dasharray="1 1.500"/>`)}
      </div>
      <i class="fr a"></i><i class="fr b"></i><i class="fr c"></i><i class="fr d"></i>
      <i class="fr e"></i><i class="fr f"></i><i class="fr h"></i><i class="fr i"></i>
    `;
  }
}
